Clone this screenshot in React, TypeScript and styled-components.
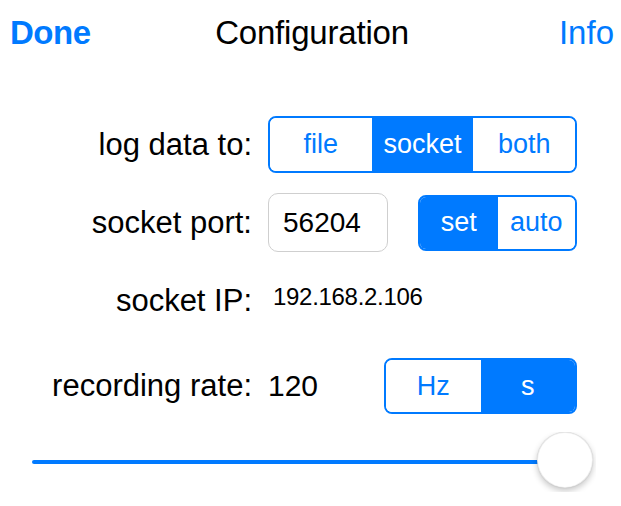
import React from "react";
import styled, { createGlobalStyle } from "styled-components";

const BLUE = "#007aff";

const Global = createGlobalStyle`
  html, body { margin: 0; padding: 0; background: #ffffff; }
  body { font-family: "Liberation Sans", Arial, sans-serif; }
`;

const Page = styled.div`
  width: 621px;
  height: 506px;
  background: #fff;
  display: flex;
  flex-direction: column;
  overflow: hidden;
`;

const Header = styled.div`
  height: 66px;
  display: grid;
  grid-template-columns: 1fr auto 1fr;
  align-items: center;
  padding: 0 7px 0 10px;
  font-size: 33px;
`;

const NavButton = styled.span<{ $bold?: boolean; $align: "left" | "right" }>`
  color: ${BLUE};
  font-weight: ${(p) => (p.$bold ? 700 : 400)};
  text-align: ${(p) => p.$align};
  letter-spacing: ${(p) => (p.$bold ? "-0.5px" : "0")};
`;

const Title = styled.span`
  color: #000;
  letter-spacing: -0.2px;
`;

const Form = styled.div`
  display: flex;
  flex-direction: column;
  padding-top: 50px;
`;

const Row = styled.div<{ $h: number; $mt: number }>`
  display: grid;
  grid-template-columns: 252px 309px;
  column-gap: 16px;
  align-items: center;
  height: ${(p) => p.$h}px;
  margin-top: ${(p) => p.$mt}px;
`;

const Label = styled.span`
  text-align: right;
  font-size: 31px;
  color: #000;
  white-space: nowrap;
`;

const Controls = styled.div`
  display: flex;
  align-items: center;
  justify-content: space-between;
  height: 100%;
`;

const Segmented = styled.div<{ $w: number; $h: number }>`
  display: flex;
  width: ${(p) => p.$w}px;
  height: ${(p) => p.$h}px;
  box-sizing: border-box;
  border: 2px solid ${BLUE};
  border-radius: 8px;
  overflow: hidden;
`;

const Segment = styled.div<{ $active?: boolean }>`
  flex: 1;
  display: flex;
  align-items: center;
  justify-content: center;
  font-size: 27px;
  background: ${(p) => (p.$active ? BLUE : "#fff")};
  color: ${(p) => (p.$active ? "#fff" : BLUE)};
`;

const TextField = styled.div`
  width: 120px;
  height: 59px;
  box-sizing: border-box;
  border: 1px solid #cfcfcf;
  border-radius: 10px;
  display: flex;
  align-items: center;
  padding-left: 14px;
  font-size: 28px;
  color: #000;
`;

const IPText = styled.span`
  font-size: 24px;
  color: #000;
  padding-left: 5px;
  margin-top: -8px;
  letter-spacing: -0.3px;
`;

const Value = styled.span`
  font-size: 30px;
  color: #000;
`;

const SliderClip = styled.div`
  width: 596px;
  height: 60px;
  margin-top: 18px;
  overflow: hidden;
  display: flex;
  align-items: flex-start;
`;

const Slider = styled.div`
  margin-left: 32px;
  width: 561px;
  height: 56px;
  display: flex;
  align-items: center;
`;

const Track = styled.div`
  flex: 1;
  height: 4px;
  margin-top: 3px;
  background: ${BLUE};
  border-radius: 2px;
`;

const Thumb = styled.div`
  width: 56px;
  height: 56px;
  margin-left: -4px;
  border-radius: 50%;
  background: #fff;
  box-sizing: border-box;
  border: 0.5px solid rgba(0, 0, 0, 0.08);
  box-shadow: 0 3px 6px rgba(0, 0, 0, 0.22), 0 0 1px rgba(0, 0, 0, 0.2);
`;

export default function App() {
  return (
    <Page>
      <Global />
      <Header>
        <NavButton $bold $align="left">Done</NavButton>
        <Title>Configuration</Title>
        <NavButton $align="right">Info</NavButton>
      </Header>
      <Form>
        <Row $h={57} $mt={0}>
          <Label>log data to:</Label>
          <Segmented $w={309} $h={57}>
            <Segment>file</Segment>
            <Segment $active>socket</Segment>
            <Segment>both</Segment>
          </Segmented>
        </Row>
        <Row $h={59} $mt={20}>
          <Label>socket port:</Label>
          <Controls>
            <TextField>56204</TextField>
            <Segmented $w={159} $h={56}>
              <Segment $active>set</Segment>
              <Segment>auto</Segment>
            </Segmented>
          </Controls>
        </Row>
        <Row $h={56} $mt={21}>
          <Label>socket IP:</Label>
          <IPText>192.168.2.106</IPText>
        </Row>
        <Row $h={56} $mt={29}>
          <Label>recording rate:</Label>
          <Controls>
            <Value>120</Value>
            <Segmented $w={193} $h={56}>
              <Segment>Hz</Segment>
              <Segment $active>s</Segment>
            </Segmented>
          </Controls>
        </Row>
        <SliderClip>
          <Slider>
            <Track />
            <Thumb />
          </Slider>
        </SliderClip>
      </Form>
    </Page>
  );
}
